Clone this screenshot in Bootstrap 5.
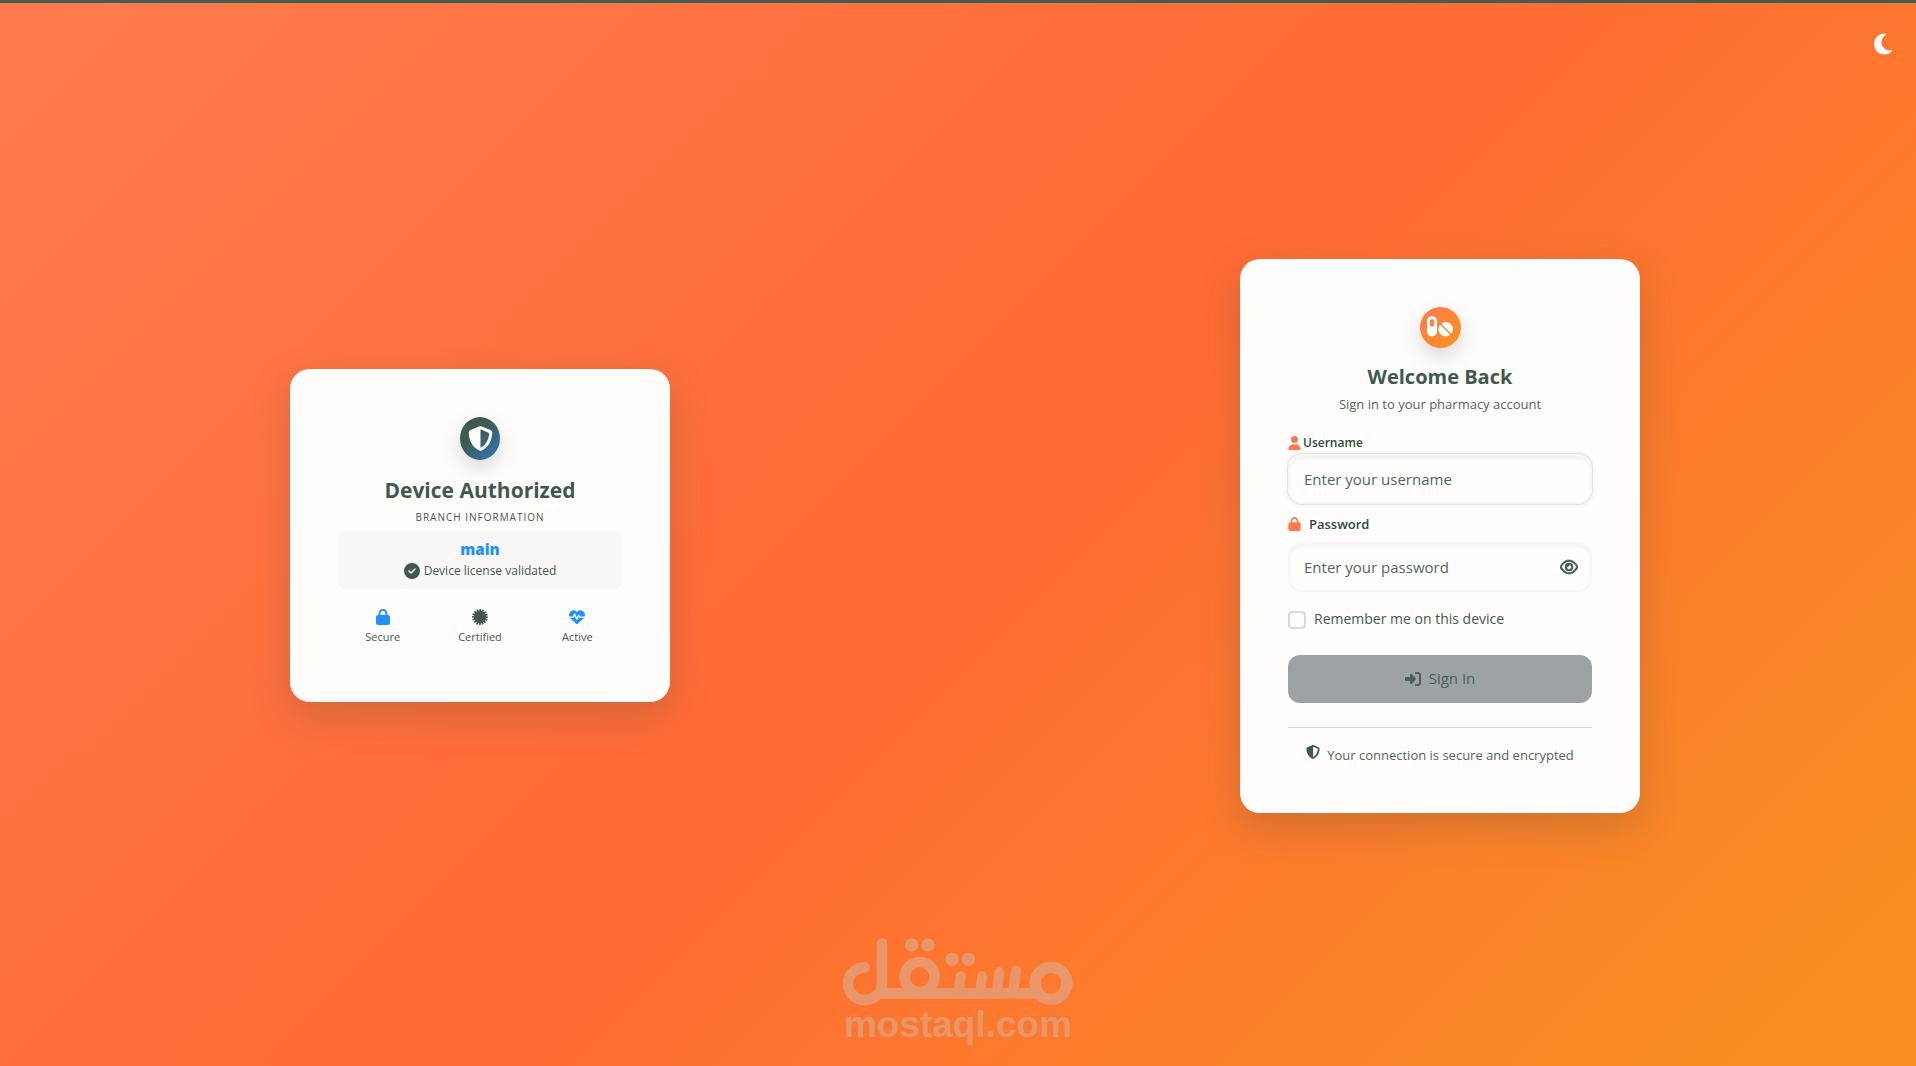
<!DOCTYPE html>
<html lang="en">
<head>
<meta charset="utf-8">
<meta name="viewport" content="width=device-width, initial-scale=1">
<title>Pharmacy Sign In</title>
<link href="https://cdn.jsdelivr.net/npm/bootstrap@5.3.0/dist/css/bootstrap.min.css" rel="stylesheet">
<style>
:root { --ink: #3f5a4c; --coral: #ff7a50; --sky: #2491fb; --paper: #fffdfc; }
body {
  font-family: "Open Sans", "Noto Sans", sans-serif;
  color: var(--ink);
  border-top: 3px solid #435e50;
  background: linear-gradient(135deg, #ff7b4f 0%, #ff6b35 50%, #f88e22 95%) no-repeat;
}
svg { fill: currentColor; flex: none; display: block; }
main { padding-top: 2px; }
.theme-btn { top: 29px; right: 23px; color: var(--paper); }
.side-start { padding-left: 2px; }
.side-end { padding-left: 6px; }
.panel {
  background: var(--paper);
  border-radius: 20px;
  padding: 48px;
  box-shadow: 0 14px 40px rgba(60, 70, 70, .22);
}
.panel-device { width: 380px; }
.panel-login { width: 400px; }
.emblem { border-radius: 50%; color: #fff; box-shadow: 0 8px 20px rgba(60, 70, 70, .2); }
.emblem-shield { width: 40px; height: 43px; background: linear-gradient(135deg, #3f5a4c 35%, #2e78c0 100%); }
.emblem-pills { width: 41px; height: 41px; background: linear-gradient(135deg, #ff7a50, #f7931e); }
.device-title { font-size: 21px; line-height: 28px; font-weight: 700; margin-top: 16px; }
.overline { font-size: 10px; line-height: 16px; letter-spacing: 1px; margin-top: 5px; }
.branch-box { background: #f9f8f7; border-radius: 8px; margin-top: 6px; padding: 8px 8px 7px; height: 58px; }
.branch-name { color: var(--sky); font-size: 15px; line-height: 20px; font-weight: 800; }
.branch-note { font-size: 12px; line-height: 20px; gap: 4px; margin-top: 2px; }
.status-list { margin-top: 20px; height: 45px; gap: 8px; }
.status-list li { font-size: 11px; line-height: 16px; gap: 4px; }
.sky { color: var(--sky); }
.login-title { font-size: 20px; line-height: 28px; font-weight: 700; margin-top: 15px; }
.login-sub { font-size: 13px; line-height: 20px; margin-top: 3px; color: #4f685c; }
.field-label { line-height: 18px; font-weight: 600; color: #2f4a3d; }
.field-label svg { color: var(--coral); }
.user-label { font-size: 12px; gap: 2px; margin-top: 20px; }
.pass-label { font-size: 13px; gap: 8px; margin-top: 11px; }
.field-input, .field-input:focus {
  height: 50px;
  border: 2px solid #f8f7f6;
  border-radius: 14px;
  padding: 0 14px;
  background: var(--paper);
  font-size: 15px;
  color: var(--ink);
}
.field-input::placeholder { color: #4f685c; opacity: 1; }
.user-input { margin-top: 2px; box-shadow: inset 0 3px 3px #f4f3f2, 0 0 0 1px #e6e5e4, 0 0 0 3px #f8f7f6; }
.pass-wrap { margin-top: 9px; }
.pass-input { padding-right: 48px; box-shadow: inset 0 3px 3px #f6f5f4; }
.eye-btn { right: 14px; top: 1px; height: 48px; color: var(--ink); }
.eye-btn svg { stroke: currentColor; stroke-width: 20px; }
.remember { gap: 8px; margin-top: 18px; }
.remember .form-check-input { width: 18px; height: 18px; border: 2px solid #d9dad9; border-radius: 4px; background-color: var(--paper); margin: 1px 0 0; }
.remember label { font-size: 14px; line-height: 18px; font-weight: 500; }
.signin, .signin:disabled { height: 48px; border: 0; border-radius: 12px; background: #9da2a4; color: #48625a; font-size: 15px; opacity: 1; margin-top: 26px; gap: 8px; }
.secure-note { border-top: 1px solid #d6d6d5; margin-top: 24px; padding-top: 17px; font-size: 13px; line-height: 20px; gap: 7px; color: #4f685c; }
.secure-note svg { color: var(--ink); }
.watermark { left: 0; right: 0; bottom: 22px; color: #e8966a; pointer-events: none; }
.watermark span { font: bold 37px/38px "Liberation Sans", Arial, sans-serif; }
</style>
</head>
<body class="min-vh-100 d-flex position-relative">
<button type="button" class="theme-btn btn p-0 border-0 position-absolute" aria-label="Toggle dark mode">
  <svg width="20" height="24" viewBox="0 0 384 512"><path d="M223.5 32C100 32 0 132.3 0 256S100 480 223.5 480c60.6 0 115.5-24.2 155.8-63.4c5-4.9 6.3-12.5 3.1-18.7s-10.1-9.7-17-8.5c-9.8 1.7-19.8 2.6-30.1 2.6c-96.9 0-175.5-78.8-175.5-176c0-65.8 36-123.1 89.3-153.3c6.1-3.5 9.2-10.5 7.7-17.3s-7.3-11.9-14.3-12.5c-6.3-.5-12.6-.8-19-.8z"/></svg>
</button>

<main class="container-fluid px-0 pb-0 d-flex">
  <div class="row g-0 flex-fill align-items-center">
    <div class="col-md-6 side-start d-flex justify-content-center">
      <section class="panel panel-device d-flex flex-column align-items-center text-center">
        <div class="emblem emblem-shield d-flex align-items-center justify-content-center">
          <svg width="25" height="25" viewBox="0 0 512 512"><path d="M256 0c4.6 0 9.2 1 13.4 2.9L457.7 82.8c22 9.3 38.4 31 38.3 57.2c-.5 99.2-41.3 280.7-213.6 363.2c-16.7 8-36.1 8-52.8 0C57.3 420.7 16.5 239.2 16 140c-.1-26.2 16.3-47.9 38.3-57.2L242.7 2.9C246.8 1 251.4 0 256 0zm0 66.8V444.8C394 378 431.1 230.1 432 141.4L256 66.8z"/></svg>
        </div>
        <h1 class="device-title mb-0">Device Authorized</h1>
        <div class="overline text-uppercase">Branch Information</div>
        <div class="branch-box w-100">
          <div class="branch-name">main</div>
          <div class="branch-note d-flex align-items-center justify-content-center">
            <svg width="16" height="16" viewBox="0 0 512 512"><path d="M256 512A256 256 0 1 0 256 0a256 256 0 1 0 0 512zM369 209L241 337c-9.4 9.4-24.6 9.4-33.9 0l-64-64c-9.4-9.4-9.4-24.6 0-33.9s24.6-9.4 33.9 0l47 47L335 175c9.4-9.4 24.6-9.4 33.9 0s9.4 24.6 0 33.9z"/></svg>
            Device license validated
          </div>
        </div>
        <ul class="status-list list-unstyled d-flex w-100 mb-0">
          <li class="col d-flex flex-column align-items-center">
            <svg class="sky" width="16" height="16" viewBox="0 0 448 512"><path d="M144 144v48H304V144c0-44.2-35.8-80-80-80s-80 35.8-80 80zM80 192V144C80 64.5 144.5 0 224 0s144 64.5 144 144v48h16c35.3 0 64 28.7 64 64V448c0 35.3-28.7 64-64 64H64c-35.3 0-64-28.7-64-64V256c0-35.3 28.7-64 64-64H80z"/></svg>
            Secure
          </li>
          <li class="col d-flex flex-column align-items-center">
            <svg width="16" height="16" viewBox="-256 -256 512 512"><circle r="205"/><circle r="222" fill="none" stroke="currentColor" stroke-width="66" pathLength="160" stroke-dasharray="6 4" stroke-dashoffset="3"/></svg>
            Certified
          </li>
          <li class="col d-flex flex-column align-items-center">
            <svg class="sky" width="16" height="16" viewBox="0 0 512 512"><path d="M47.6 300.4L228.3 469.1c7.5 7 17.4 10.9 27.7 10.9s20.2-3.9 27.7-10.9L464.4 300.4c30.4-28.3 47.6-68 47.6-109.5v-5.8c0-69.9-50.5-129.5-119.4-141C347 36.5 300.6 51.4 268 84L256 96 244 84c-32.6-32.6-79-47.5-124.6-39.9C50.5 55.6 0 115.2 0 185.1v5.8c0 41.5 17.2 81.2 47.6 109.5z"/><path d="M0 260H140L185 165L250 325L310 205L340 260H512" fill="none" stroke="#fffdfc" stroke-width="44" stroke-linejoin="round"/></svg>
            Active
          </li>
        </ul>
      </section>
    </div>

    <div class="col-md-6 side-end d-flex justify-content-center">
      <form class="panel panel-login">
        <div class="d-flex flex-column align-items-center text-center">
          <div class="emblem emblem-pills d-flex align-items-center justify-content-center">
            <svg width="26" height="24" viewBox="0 16 576 512"><path d="M112 96c-26.5 0-48 21.5-48 48V256h96V144c0-26.5-21.5-48-48-48zM0 144C0 82.1 50.1 32 112 32s112 50.1 112 112V368c0 61.9-50.1 112-112 112S0 429.9 0 368V144zM554.9 399.4c-7.1 12.3-23.7 13.1-33.8 3.1L333.5 214.9c-10-10-9.3-26.7 3.1-33.8C360 167.7 387.1 160 416 160c88.4 0 160 71.6 160 160c0 28.9-7.7 56-21.1 79.4zm-59.5 59.5C472 472.3 444.9 480 416 480c-88.4 0-160-71.6-160-160c0-28.9 7.7-56 21.1-79.4c7.1-12.3 23.7-13.1 33.8-3.1L498.5 425.1c10 10 9.3 26.7-3.1 33.8z"/></svg>
          </div>
          <h2 class="login-title mb-0">Welcome Back</h2>
          <p class="login-sub mb-0">Sign in to your pharmacy account</p>
        </div>

        <label for="username" class="field-label user-label d-flex align-items-center">
          <svg width="13" height="14" viewBox="0 0 448 512"><path d="M224 256A128 128 0 1 0 224 0a128 128 0 1 0 0 256zm-45.7 48C79.8 304 0 383.8 0 482.3C0 498.7 13.3 512 29.7 512H418.3c16.4 0 29.7-13.3 29.7-29.7C448 383.8 368.2 304 269.7 304H178.3z"/></svg>
          Username
        </label>
        <input id="username" type="text" class="form-control field-input user-input" placeholder="Enter your username">

        <label for="password" class="field-label pass-label d-flex align-items-center">
          <svg width="13" height="14" viewBox="0 0 448 512"><path d="M144 144v48H304V144c0-44.2-35.8-80-80-80s-80 35.8-80 80zM80 192V144C80 64.5 144.5 0 224 0s144 64.5 144 144v48h16c35.3 0 64 28.7 64 64V448c0 35.3-28.7 64-64 64H64c-35.3 0-64-28.7-64-64V256c0-35.3 28.7-64 64-64H80z"/></svg>
          Password
        </label>
        <div class="pass-wrap position-relative">
          <input id="password" type="password" class="form-control field-input pass-input" placeholder="Enter your password">
          <button type="button" class="eye-btn btn p-0 border-0 position-absolute" aria-label="Show password">
            <svg width="18" height="16" viewBox="0 0 576 512"><path d="M288 80c-65.2 0-118.8 29.6-159.9 67.7C89.6 183.5 63 226 49.4 256c13.6 30 40.2 72.5 78.6 108.3C169.2 402.4 222.8 432 288 432s118.8-29.6 159.9-67.7C486.4 328.5 513 286 526.6 256c-13.6-30-40.2-72.5-78.6-108.3C406.8 109.6 353.2 80 288 80zM95.4 112.6C142.5 68.8 207.2 32 288 32s145.5 36.8 192.6 80.6c46.8 43.5 78.1 95.4 93 131.1c3.3 7.9 3.3 16.7 0 24.6c-14.9 35.7-46.2 87.7-93 131.1C433.5 443.2 368.8 480 288 480s-145.5-36.8-192.6-80.6C48.6 356 17.3 304 2.5 268.3c-3.3-7.9-3.3-16.7 0-24.6C17.3 208 48.6 156 95.4 112.6zM288 336c44.2 0 80-35.8 80-80s-35.8-80-80-80c-.7 0-1.3 0-2 0c1.3 5.1 2 10.5 2 16c0 35.3-28.7 64-64 64c-5.5 0-10.9-.7-16-2c0 .7 0 1.3 0 2c0 44.2 35.8 80 80 80zm0-208a128 128 0 1 1 0 256 128 128 0 1 1 0-256z"/></svg>
          </button>
        </div>

        <div class="remember d-flex">
          <input id="remember" type="checkbox" class="form-check-input">
          <label for="remember">Remember me on this device</label>
        </div>

        <button type="submit" class="signin btn w-100 d-flex align-items-center justify-content-center" disabled>
          <svg width="16" height="16" viewBox="0 0 512 512"><path d="M217.9 105.9L340.7 228.7c7.2 7.2 11.3 17.1 11.3 27.3s-4.1 20.1-11.3 27.3L217.9 406.1c-6.4 6.4-15 9.9-24 9.9c-18.7 0-33.9-15.2-33.9-33.9l0-62.1L32 320c-17.7 0-32-14.3-32-32l0-64c0-17.7 14.3-32 32-32l128 0 0-62.1c0-18.7 15.2-33.9 33.9-33.9c9 0 17.6 3.6 24 9.9zM352 416l64 0c17.7 0 32-14.3 32-32l0-256c0-17.7-14.3-32-32-32l-64 0c-17.7 0-32-14.3-32-32s14.3-32 32-32l64 0c53 0 96 43 96 96l0 256c0 53-43 96-96 96l-64 0c-17.7 0-32-14.3-32-32s14.3-32 32-32z"/></svg>
          Sign In
        </button>

        <div class="secure-note d-flex justify-content-center">
          <svg width="14" height="14" viewBox="0 0 512 512"><path d="M256 0c4.6 0 9.2 1 13.4 2.9L457.7 82.8c22 9.3 38.4 31 38.3 57.2c-.5 99.2-41.3 280.7-213.6 363.2c-16.7 8-36.1 8-52.8 0C57.3 420.7 16.5 239.2 16 140c-.1-26.2 16.3-47.9 38.3-57.2L242.7 2.9C246.8 1 251.4 0 256 0zm0 66.8V444.8C394 378 431.1 230.1 432 141.4L256 66.8z"/></svg>
          Your connection is secure and encrypted
        </div>
      </form>
    </div>
  </div>
</main>

<div class="watermark position-absolute d-flex flex-column align-items-center">
  <svg width="230" height="68" viewBox="69 57 690 204" role="img" aria-label="Mostaql logo">
    <g fill="none" stroke="currentColor" stroke-width="32" stroke-linecap="round">
      <path d="M186 73V194A51 49 0 1 1 134 145"/>
      <path d="M170 223H660" stroke-linecap="butt"/>
      <circle cx="299" cy="174" r="45"/>
      <circle cx="693" cy="193" r="48" stroke-width="34"/>
      <path d="M422 172L417 215M486 172L482 215M538 160L531 215M588 154L580 215" stroke-width="30"/>
    </g>
    <circle cx="275" cy="78" r="20"/><circle cx="324" cy="78" r="20"/><circle cx="396" cy="121" r="20"/><circle cx="445" cy="121" r="20"/>
  </svg>
  <span>mostaql.com</span>
</div>
<script src="https://cdn.jsdelivr.net/npm/bootstrap@5.3.0/dist/js/bootstrap.bundle.min.js"></script>
</body>
</html>
